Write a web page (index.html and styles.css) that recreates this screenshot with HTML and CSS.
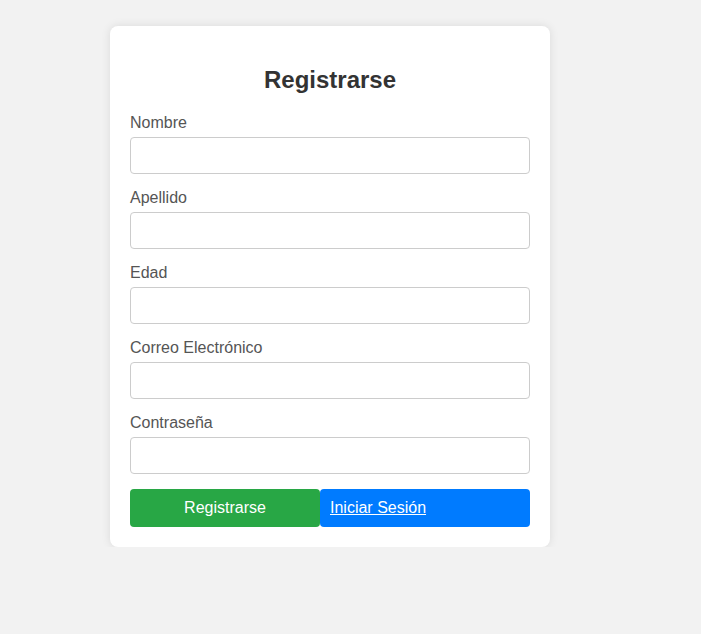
FILE: index.html
```html
<!DOCTYPE html>
<html lang="es">
<head>
<meta charset="utf-8">
<title>Registrarse</title>
<link rel="stylesheet" href="styles.css">
</head>
<body>
<div class="page">
  <form class="card">
    <h2 class="title">Registrarse</h2>
    <label class="label" for="nombre">Nombre</label>
    <input class="input" id="nombre" type="text">
    <label class="label" for="apellido">Apellido</label>
    <input class="input" id="apellido" type="text">
    <label class="label" for="edad">Edad</label>
    <input class="input" id="edad" type="text">
    <label class="label" for="correo">Correo Electrónico</label>
    <input class="input" id="correo" type="text">
    <label class="label" for="pass">Contraseña</label>
    <input class="input" id="pass" type="password">
    <div class="actions">
      <button class="btn-primary" type="button">Registrarse</button>
      <a class="btn-link" href="#">Iniciar Sesión</a>
    </div>
  </form>
</div>
</body>
</html>
```
FILE: styles.css
```css
html, body {
  margin: 0;
  padding: 0;
  background: #f2f2f2;
  font-family: "Liberation Sans", Arial, sans-serif;
}
.page {
  padding: 26px 0 0 110px;
}
.card {
  width: 400px;
  padding: 20px;
  background: #fff;
  border-radius: 8px;
  box-shadow: 0 0 10px rgba(0, 0, 0, 0.1);
  display: flex;
  flex-direction: column;
}
.title {
  margin: 20px 0;
  font-size: 24px;
  line-height: 28px;
  text-align: center;
  color: #333;
}
.label {
  display: block;
  font-size: 16px;
  line-height: 18px;
  color: #555;
  margin-bottom: 5px;
}
.input {
  box-sizing: border-box;
  width: 100%;
  height: 37px;
  margin: 0 0 15px;
  padding: 8px;
  border: 1px solid #ccc;
  border-radius: 4px;
  font-size: 16px;
  font-family: inherit;
}
.actions {
  display: flex;
}
.btn-primary {
  width: 190px;
  height: 38px;
  border: none;
  border-radius: 4px;
  background: #28a745;
  color: #fff;
  font-size: 16px;
  font-family: inherit;
  padding: 0;
}
.btn-link {
  flex: 1;
  box-sizing: border-box;
  height: 38px;
  padding: 10px;
  line-height: 18px;
  font-size: 16px;
  border-radius: 4px;
  background: #007bff;
  color: #fff;
  text-decoration: underline;
}
```
